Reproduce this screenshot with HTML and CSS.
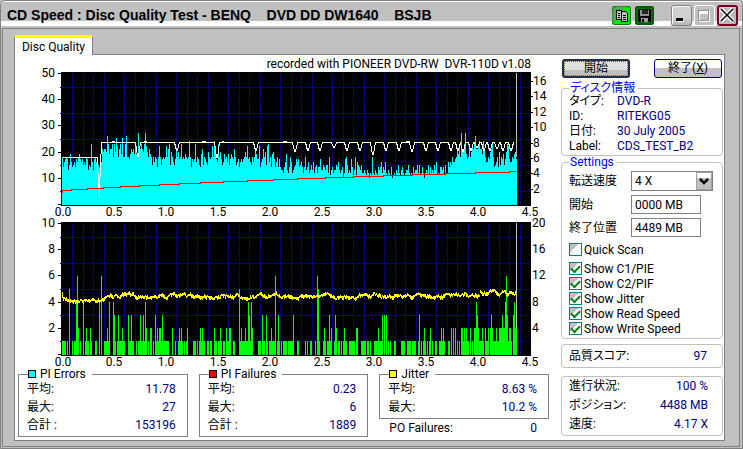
FILE: index.html
```html
<!DOCTYPE html>
<html lang="ja">
<head>
<meta charset="utf-8">
<title>CD Speed : Disc Quality Test</title>
<link rel="stylesheet" href="styles.css">
</head>
<body>
<div class="window">
  <header class="titlebar">
    <h1 class="title">CD Speed : Disc Quality Test - BENQ    DVD DD DW1640    BSJB</h1>
    <div class="tools">
      <button class="tool copy" aria-label="Copy">
        <svg viewBox="0 0 19 19" width="19" height="19" shape-rendering="crispEdges"><path d="M0 4 4 0H14L8 6H3V15H0Z" fill="#808080" opacity=".6"/><path d="M4.500 4.500H9.500V13.500H4.500Z M9.500 5.500H13.500L15.500 7.500V15.500H9.500Z" fill="#c0c0c0" stroke="#000"/><path d="M6 7h2M6 9h2M6 11h2M11 9h3M11 11h3M11 13h3" stroke="#000"/></svg>
      </button>
      <button class="tool save" aria-label="Save">
        <svg viewBox="0 0 19 19" width="19" height="19" shape-rendering="crispEdges"><path d="M3 3H16V16H4L3 15Z" fill="#000"/><path d="M5 4H14V10H5Z" fill="#909090"/><path d="M7 4H13V8H7Z" fill="#202820"/><path d="M6 12H13V16H6Z" fill="#a0a0a0"/><path d="M7 13H9V16H7Z" fill="#000"/></svg>
      </button>
    </div>
    <div class="controls">
      <button class="control" aria-label="Minimize"><svg viewBox="0 0 21 21" width="21" height="21" shape-rendering="crispEdges"><path d="M5 13h7v3H5z" fill="#000"/><path d="M6 16h7v1H6z" fill="#fff"/></svg></button>
      <button class="control flat" aria-label="Maximize"><svg viewBox="0 0 21 21" width="21" height="21" shape-rendering="crispEdges"><path d="M5 6H16V17H5Z M6 9V16H15V9Z" fill="#fff" fill-rule="evenodd"/><path d="M4.500 5.500H14.500V15.500H4.500Z" fill="none" stroke="#909090"/></svg></button>
      <button class="control close" aria-label="Close"><svg viewBox="0 0 21 21" width="21" height="21"><path d="M4 4 16 16M16 4 4 16" stroke="#fff" stroke-width="4"/><path d="M4 4 16 16M16 4 4 16" stroke="#000" stroke-width="1.500"/></svg></button>
    </div>
  </header>
  <main class="client">
    <div class="tabs" role="tablist"><button class="tab" role="tab" aria-selected="true">Disc Quality</button></div>
    <div class="panel">
      <div class="results">
        <p class="recorder">recorded with PIONEER DVD-RW&nbsp; DVR-110D v1.08</p>
        <svg class="chart" id="errors" viewBox="15 71 536 149" role="img" aria-label="PI Errors"></svg>
        <svg class="chart" id="failures" viewBox="15 220 536 148" role="img" aria-label="PI Failures, Jitter"></svg>
        <div class="groups">
          <fieldset class="stats">
            <legend><i class="swatch cyan"></i>PI Errors</legend>
            <p class="row"><span>平均:</span><output>11.78</output></p>
            <p class="row"><span>最大:</span><output>27</output></p>
            <p class="row"><span>合計 :</span><output>153196</output></p>
          </fieldset>
          <fieldset class="stats">
            <legend><i class="swatch red"></i>PI Failures</legend>
            <p class="row"><span>平均:</span><output>0.23</output></p>
            <p class="row"><span>最大:</span><output>6</output></p>
            <p class="row"><span>合計 :</span><output>1889</output></p>
          </fieldset>
          <div class="stack">
            <fieldset class="stats">
              <legend><i class="swatch yellow"></i>Jitter</legend>
              <p class="row"><span>平均:</span><output>8.63 %</output></p>
              <p class="row"><span>最大:</span><output>10.2 %</output></p>
            </fieldset>
            <p class="row po"><span>PO Failures:</span><output>0</output></p>
          </div>
        </div>
      </div>
      <aside class="side">
        <div class="actions">
          <button class="push default">開始</button>
          <button class="push">終了(<u>X</u>)</button>
        </div>
        <fieldset class="box info">
          <legend>ディスク情報</legend>
          <dl>
            <dt>タイプ:</dt><dd>DVD-R</dd>
            <dt>ID:</dt><dd>RITEKG05</dd>
            <dt>日付:</dt><dd>30 July 2005</dd>
            <dt>Label:</dt><dd>CDS_TEST_B2</dd>
          </dl>
        </fieldset>
        <fieldset class="box settings">
          <legend>Settings</legend>
          <div class="form">
            <label for="speed">転送速度</label>
            <div class="picker"><select id="speed"><option>4 X</option></select><span class="arrow"><svg viewBox="0 0 16 18" width="16" height="18"><path d="M4 7 8 11 12 7" fill="none" stroke="#000" stroke-width="2.500"/></svg></span></div>
            <label for="start">開始</label><input id="start" type="text" value="0000 MB">
            <label for="end">終了位置</label><input id="end" type="text" value="4489 MB">
          </div>
          <label class="check quick"><input type="checkbox">Quick Scan</label>
          <label class="check"><input type="checkbox" checked>Show C1/PIE</label>
          <label class="check"><input type="checkbox" checked>Show C2/PIF</label>
          <label class="check"><input type="checkbox" checked>Show Jitter</label>
          <label class="check"><input type="checkbox" checked>Show Read Speed</label>
          <label class="check"><input type="checkbox" checked>Show Write Speed</label>
        </fieldset>
        <div class="box score"><p class="row"><span>品質スコア:</span><output>97</output></p></div>
        <div class="box progress">
          <p class="row"><span>進行状況:</span><output>100 %</output></p>
          <p class="row"><span>ポジション:</span><output>4488 MB</output></p>
          <p class="row"><span>速度:</span><output>4.17 X</output></p>
        </div>
      </aside>
    </div>
  </main>
</div>
<script src="charts.js"></script>
</body>
</html>
```
FILE: styles.css
```css
* { box-sizing: border-box; }

body {
  margin: 0;
  background: #c0c0c0;
  color: #000;
  font: 12px/14px Roboto, "Noto Sans CJK JP", sans-serif;
  font-feature-settings: "palt";
}

button, input, select { font: inherit; color: inherit; margin: 0; }
p, dl, dd, h1 { margin: 0; }
output, dd { color: #000080; }

.window {
  display: flex;
  flex-direction: column;
  min-height: 100vh;
  border: 1px solid #808080;
  border-radius: 5px 5px 0 0;
  box-shadow: inset 0 1px #fff;
  background: #c0c0c0;
}

.titlebar {
  display: flex;
  align-items: center;
  height: 27px;
  padding: 2px 4px 0 6px;
  background: linear-gradient(transparent 20px, #fff 20px, #fff 25px, transparent 25px);
}

.title { flex: 1; font: bold 14px/18px "Liberation Sans", sans-serif; padding-bottom: 1px; white-space: pre; }
.tools { display: flex; gap: 4px; margin-right: 17px; }
.controls { display: flex; gap: 2px; }

.tool, .control { padding: 0; border: 0; border-radius: 3px; overflow: hidden; }
.tool { width: 19px; height: 19px; }
.tool svg, .control svg { display: block; }
.copy { background: #00e800; box-shadow: inset 0 0 0 1px #008000; }
.save { background: #008000; box-shadow: inset 0 0 0 2px #005800; }

.control {
  width: 21px;
  height: 21px;
  background: linear-gradient(#d0d0d0 60%, #b0b0b0);
  box-shadow: inset 0 0 0 1px #808080, inset 2px 2px #fff;
}
.flat { background: #c0c0c0; box-shadow: inset 0 0 0 1px #fff; }
.close { box-shadow: inset 0 0 0 2px #800020, inset 3px 3px #d0d0d0; background: #b8b8b8; }

.client {
  flex: 1;
  display: flex;
  flex-direction: column;
  margin: 0 2px 1px 1px;
  border: 1px solid #808080;
  padding: 6px 14px 5px 11px;
}

.tabs { display: flex; }
.tab {
  width: 79px;
  height: 20px;
  margin-bottom: -1px;
  padding: 0;
  background: #fff;
  border: 1px solid #808080;
  border-top: 3px solid #ff0;
  border-bottom: 0;
  border-radius: 2px 2px 0 0;
  position: relative;
}

.panel {
  flex: 1;
  display: grid;
  grid-template-columns: minmax(0, 1fr) 162px;
  gap: 10px;
  padding-right: 1px;
  background: #fff;
  border: 1px solid #808080;
}

.recorder { padding: 2px 20px 0 0; text-align: right; }
.chart { display: block; width: 100%; overflow: visible; }

.groups { display: grid; grid-template-columns: repeat(3, 1fr); gap: 11px; padding: 0 2px 0 3px; }
.stats { min-width: 0; margin: 0; padding: 0 11px 2px 8px; border: 1px solid #808080; }
.stats legend { display: flex; align-items: center; height: 12px; margin-left: 1px; padding: 0 6px 0 0; line-height: 12px; background: #fff; }
.row { display: flex; justify-content: space-between; line-height: 18px; }
.po { padding: 0 12px 0 10px; }
.swatch { width: 8px; height: 8px; margin-right: 4px; border: 1px solid #000; }
.cyan { background: #0ff; }
.red { background: #f00; }
.yellow { background: #ff0; }

.side { padding-top: 4px; }
.actions { display: flex; justify-content: space-between; margin-bottom: 4px; padding: 0 1px; }
.push {
  width: 68px;
  height: 19px;
  padding: 0;
  line-height: 15px;
  border: 1px solid #000080;
  border-radius: 3px;
  background: linear-gradient(#fff 50%, #c0c0c0 50%);
}
.default { border: 2px solid #203048; background: linear-gradient(#e0e0e0 60%, #c0c0c0 60%); outline: 1px dotted #806000; outline-offset: -3px; }

.box { min-width: 0; margin: 0; padding: 0 7px; border: 1px solid #c0c0c0; border-radius: 4px; }
.box legend { height: 12px; padding: 0 3px 0 1px; line-height: 12px; color: #00f; }
.info { padding-bottom: 1px; }
.info dl { display: grid; grid-template-columns: 48px 1fr; line-height: 15px; }
.settings { padding-bottom: 2px; }
.form { display: grid; grid-template-columns: 62px auto; gap: 4px 0; align-items: center; justify-content: start; padding-top: 3px; }
.form input { width: 70px; height: 19px; padding: 0 3px; border: 1px solid #808080; background: #fff; }
.picker { display: flex; position: relative; }
.picker select { appearance: none; width: 82px; height: 20px; padding: 0 3px; border: 1px solid #808080; border-radius: 0; background: #fff; }
.arrow { position: absolute; right: 1px; top: 1px; width: 16px; height: 18px; background: linear-gradient(#fff 30%, #c0c0c0 30%); border: 1px solid #a0a0a0; pointer-events: none; overflow: hidden; }
.arrow svg { display: block; margin: -1px; }

.check { display: flex; align-items: center; height: 15px; }
.quick { margin: 5px 0 4px; }
.check input {
  appearance: none;
  width: 13px;
  height: 13px;
  margin-right: 2px;
  border: 1px solid #008080;
  background: linear-gradient(135deg, #c0c0c0 40%, #fff 40%);
  display: grid;
  place-items: center;
}
.check input:checked::before {
  content: "";
  width: 7px;
  height: 4px;
  margin-bottom: 2px;
  border: solid #008000;
  border-width: 0 0 2px 2px;
  transform: rotate(-45deg);
}

.score { margin-top: 5px; padding: 2px 15px 2px 7px; }
.progress { margin-top: 8px; padding: 0 14px 1px 7px; }
.progress .row { line-height: 19px; }
```
FILE: charts.js
```js
const NS = "http://www.w3.org/2000/svg";
const LEFT = 62;

function add(svg, tag, attrs, text) {
  const node = document.createElementNS(NS, tag);
  for (const key in attrs) node.setAttribute(key, attrs[key]);
  if (text) node.textContent = text;
  svg.appendChild(node);
}

function stroke(svg, d, color) {
  add(svg, "path", { d, stroke: color, fill: "none", "shape-rendering": "crispEdges" });
}

function label(svg, x, y, text, anchor) {
  add(svg, "text", { x, y: y + 4, "text-anchor": anchor }, text);
}

/* Plot area, grid lines and scales. top is the plot's upper edge. */
function frame(svg, top, leftLabels, rightLabels, rightStep, rightStart) {
  add(svg, "rect", { x: 61, y: top, width: 470, height: 134, fill: "#000", "shape-rendering": "crispEdges" });
  let d = "";
  for (let k = 1; k < 45; k++) {
    if (k % 5) {
      const x = Math.round(LEFT + k * 10.4) + 0.5;
      for (let r = 0; r < 5; r++) d += `M${x} ${top + 2 + Math.round(r * 26.2)}v25`;
    }
  }
  for (let r = 0; r < 5; r++) d += `M60 ${top + 15.5 + r * 26}H530`;
  stroke(svg, d, "#000080");
  d = "";
  for (let r = 0; r < 6; r++) d += `M58 ${top + 1.5 + Math.round(r * 26.2)}h3`;
  leftLabels.forEach((t, i) => label(svg, 55, top + 1 + Math.round(i * 26.2), t, "end"));
  rightLabels.forEach((t, i) => {
    const y = top + rightStart + Math.round(i * rightStep);
    label(svg, 532 + (rightStart > 5 ? 1 : 0), y, t, "start");
    if (rightStart > 5) d += `M531 ${y + 0.5}h2`;
  });
  stroke(svg, d, "#000");
  for (let i = 0; i < 10; i++) label(svg, (i ? LEFT : LEFT + 1) + Math.round(i * 52), top + 140, (i / 2).toFixed(1), "middle");
}

/* PI error count for each pixel column, in base 36. */
const pie =
  "ieghihdfjgefgehgijhg" + "hfgfihdfengdhighfehg" + "lkllkqnjllninkpmilnj" +
  "piinqiihjlkljmjirkln" + "lknrmkiljifigiheimif" + "hihimilnfkigfhlikhin" +
  "hihjihioiehghngihfej" + "lfihgfkihimiolhgnikh" + "fgjhigjfhjihlifghegh" +
  "ghikimhigfigiljhhmeg" + "hlikfmngiejkhegiehed" + "dcegjdceigcdefhghefg" +
  "eceidegcdfdgcefceehd" + "dfedffcibdecddfegdcd" + "eachifcdchebdibgfedf" +
  "ccdcbdcacbicbdcbedeg" + "cedgcbdcbeabcbdcfcbd" + "ecbcddfcbcbecddfcfbc" +
  "ecacdcfbecdcfdgbcbee" + "debfccgegfigghiljmir" + "lknrjhimikmlnqllnoll" +
  "joliggihklniefgiekfi" + "hjfhknmhggihjkh";

const errors = document.getElementById("errors");
frame(errors, 72, ["50", "40", "30", "20", "10"], ["16", "14", "12", "10", "8", "6", "4", "2"], 15.4, 9);
stroke(errors, [...pie].map((c, i) => `M${LEFT + i + 0.5} 205V${204 - Math.round(parseInt(c, 36) * 2.62)}`).join(""), "#0ff");
stroke(errors, "M516.5 73V157", "#c0c0c0");

const writeDips = [[138, 14], [177, 8], [217, 15], [256, 8], [295, 9], [308, 8], [320, 8], [334, 5], [347, 8], [360, 8],
  [373, 12], [386, 8], [399, 8], [412, 9], [426, 8], [438, 8], [451, 8], [458, 8], [463, 9], [471, 8], [477, 5], [484, 8],
  [490, 8], [497, 6], [503, 8], [511, 8]];
let write = "M62.5 157.5H97.5L98.500 188.5H99.5V199V188.5L101.5 142.5";
writeDips.forEach(([x, depth]) => {
  write += `H${x - 2.5}L${x - 0.5} ${142.5 + depth}H${x + 0.5}L${x + 2.5} 142.5`;
});
stroke(errors, write + "H513", "#fff");
stroke(errors, "M112 141.5h3M144 141.5h3M202 141.5h4M222 141.5h2M283 141.5h4M406 141.5h4", "#fff");

const steps = [[71, 190], [87, 189], [103, 188], [120, 187], [139, 186], [159, 185], [179, 184], [200, 183],
  [223, 182], [247, 181], [273, 180], [297, 179], [325, 178], [353, 177], [383, 176], [412, 175], [445, 174], [475, 173], [509, 172], [515, 171]];
stroke(errors, "M62.5 193V190.5" + steps.map(([x, y]) => `V${y + 0.5}H${x + 0.5}`).join(""), "#f00");

/* PI failures: columns with at least one, then the higher counts. */
const runs = [[62, 65], [67, 67], [69, 69], [72, 72], [74, 78], [80, 80], [83, 83], [85, 88], [90, 91], [95, 96], [99, 99],
  [101, 101], [104, 109], [113, 115], [117, 124], [128, 133], [136, 136], [138, 146], [148, 148], [150, 151], [153, 153],
  [155, 168], [172, 172], [175, 175], [178, 182], [184, 184], [186, 187], [193, 195], [197, 197], [199, 204], [207, 208],
  [210, 211], [214, 216], [218, 221], [223, 224], [226, 230], [233, 234], [239, 251], [258, 260], [262, 264], [266, 267],
  [269, 271], [272, 275], [277, 279], [281, 281], [283, 286], [288, 293], [297, 298], [305, 305], [307, 307], [310, 311],
  [315, 315], [317, 319], [323, 325], [327, 331], [334, 336], [338, 339], [341, 341], [343, 346], [349, 354], [357, 357],
  [361, 365], [367, 368], [370, 370], [374, 382], [384, 384], [386, 386], [388, 388], [390, 390], [394, 395], [401, 404],
  [407, 410], [412, 415], [418, 419], [421, 421], [423, 423], [425, 425], [427, 427], [429, 430], [432, 432], [435, 436],
  [439, 444], [448, 449], [451, 451], [453, 453], [455, 455], [457, 457], [459, 459], [461, 468], [470, 470], [472, 472],
  [474, 483], [485, 488], [490, 511], [513, 516]];
const peaks = { 69: 5, 76: 4, 77: 6, 78: 2, 83: 4, 86: 2, 90: 2, 99: 4, 101: 6, 107: 2, 109: 4, 113: 4, 114: 3, 118: 3, 122: 2,
  128: 3, 131: 3, 140: 3, 143: 3, 145: 4, 146: 2, 150: 2, 151: 2, 155: 3, 157: 2, 159: 2, 160: 2, 162: 3, 172: 2, 179: 2,
  181: 2, 187: 2, 200: 2, 202: 2, 214: 2, 220: 2, 226: 2, 229: 2, 230: 2, 239: 5, 241: 2, 245: 2, 248: 4, 249: 3, 251: 4,
  252: 2, 262: 3, 266: 3, 271: 2, 275: 6, 278: 3, 293: 3, 317: 6, 318: 5, 324: 2, 329: 3, 331: 2, 335: 3, 336: 2, 344: 2,
  356: 2, 357: 2, 378: 2, 382: 3, 384: 3, 386: 3, 419: 3, 424: 2, 430: 2, 441: 2, 443: 2, 451: 2, 453: 2, 455: 2, 461: 2,
  462: 2, 464: 2, 466: 2, 470: 2, 474: 2, 475: 2, 476: 4, 477: 3, 478: 2, 482: 2, 485: 2, 488: 2, 490: 2, 491: 3, 492: 2,
  496: 2, 499: 2, 500: 2, 501: 2, 502: 3, 503: 2, 504: 2, 505: 4, 506: 6, 507: 3, 509: 2, 510: 2, 513: 3, 514: 4, 515: 2, 516: 2 };

const failures = document.getElementById("failures");
frame(failures, 222, ["10", "8", "6", "4", "2"], ["20", "16", "12", "8", "4"], 26.2, 1);
let bars = "";
runs.forEach(([from, to]) => { for (let x = from; x <= to; x++) bars += `M${x + 0.5} 355V341`; });
for (const x in peaks) bars += `M${+x + 0.5} 355V${354 - Math.round(peaks[x] * 13.05)}`;
stroke(failures, bars, "#0f0");
stroke(failures, "M516.5 223V328", "#c0c0c0");

let seed = 7;
function random() {
  seed = (seed * 16807) % 2147483647;
  return seed / 2147483647;
}
let jitter = "M62.5 292v6";
let drift = 0;
for (let x = 63; x < 516; x++) {
  drift = drift * 0.7 + (random() - 0.5) * 3;
  const level = x < 98 ? 299 : x < 107 ? 298 : x < 480 ? 295 : 292;
  const height = 2 + Math.floor(random() * 3);
  jitter += `M${x + 0.5} ${level + Math.round(drift - height / 2) + 1}v${height}`;
}
stroke(failures, jitter, "#ff0");
```
